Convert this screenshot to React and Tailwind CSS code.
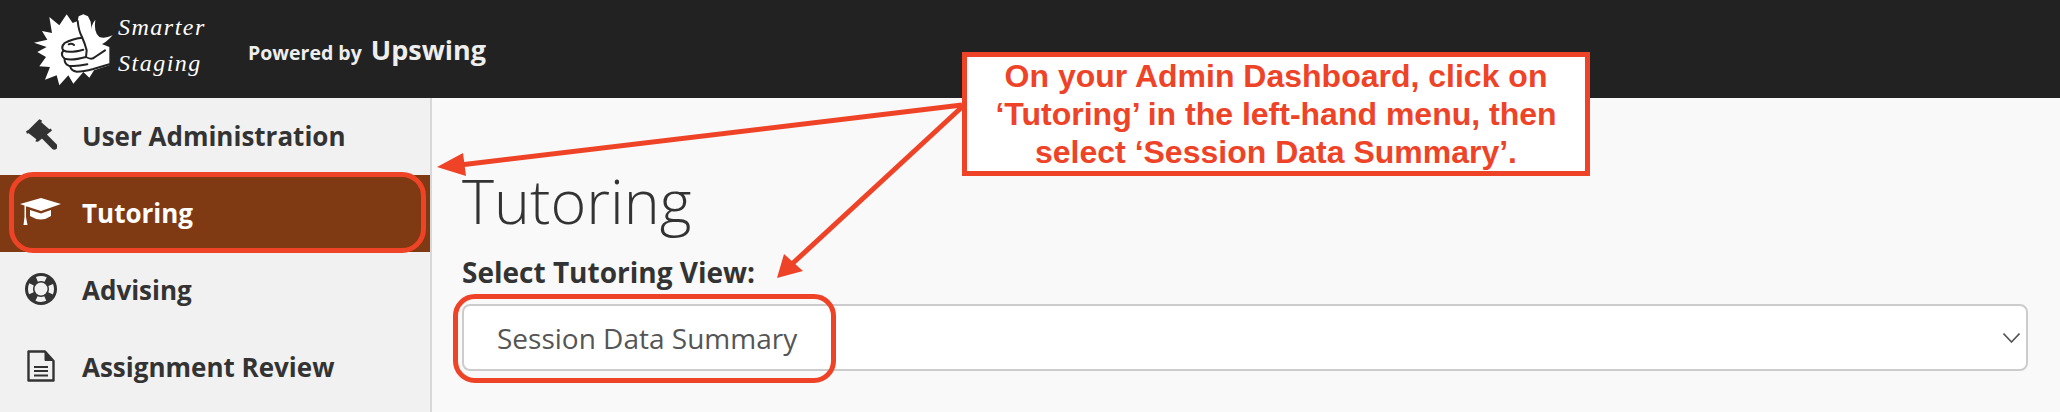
import React from 'react';

const openSans = { fontFamily: '"Open Sans", sans-serif' };

const GavelIcon = () => (
    <svg width="31" height="31" viewBox="0 0 93 92" fill="currentColor">
        <path d="M0 36 L8 32 L36 4 L40 0 L48 4 L46 9 L70 30 L74 28 L78 34 L36 68 L28 67 L31 60 L8 42 L3 44 Z" />
        <path d="M50 47 L85 82" stroke="currentColor" strokeWidth="19" strokeLinecap="round" />
    </svg>
);

const CapIcon = () => (
    <svg width="42" height="28" viewBox="0 0 42 28" fill="currentColor">
        <path d="M0 6 L21 0 L41 6 L21 13 L7 8.5 L6 8.5 L6 19 L7.5 27 L3.5 27 L4.5 19 L4.5 7.5 Z" />
        <path d="M10 12 L21 15.5 L31 12 L31 18 Q21 25 10 18 Z" />
    </svg>
);

const RingIcon = () => (
    <svg width="32" height="32" viewBox="0 0 32 32">
        <circle cx="16" cy="16" r="16" fill="currentColor" />
        <circle cx="16" cy="16" r="10.5" fill="none" stroke="#f1f1f1" strokeWidth="5" strokeDasharray="9 7.49" strokeDashoffset="4.5" />
        <circle cx="16" cy="16" r="6.5" fill="#f1f1f1" />
    </svg>
);

const FileIcon = () => (
    <svg width="28" height="32" viewBox="0 0 28 32" fill="none" stroke="currentColor">
        <path d="M1.5 1.5 H18 L26.5 11 V30.5 H1.5 Z" strokeWidth="2.4" strokeLinejoin="round" />
        <path d="M18 1.5 V10.5 H26.5 Z" fill="currentColor" strokeWidth="1" />
        <path d="M7 17 H21 M7 21 H21 M7 25.5 H21" strokeWidth="2" />
    </svg>
);

const navItems = [
    { label: 'User Administration', icon: GavelIcon },
    { label: 'Tutoring', icon: CapIcon, active: true },
    { label: 'Advising', icon: RingIcon },
    { label: 'Assignment Review', icon: FileIcon },
];

const Logo = () => (
    <svg width="90" height="85" viewBox="0 0 270 255" className="shrink-0">
        {/* burst + thumb */}
        <polygon
            fill="#fff"
            points="12,107 52,98 36,72 66,78 58,30 88,55 110,22 128,48 143,42 146,28 160,22 174,28 182,44 186,78 198,104 238,120 238,175 192,190 178,212 160,195 130,230 115,205 88,235 80,205 45,218 60,180 28,178 48,150 22,135 50,120"
        />
        {/* crescent */}
        <path d="M196 38 Q190 75 208 90 Q225 96 248 85 Q225 110 210 114 Q190 108 182 80 Q182 55 196 38 Z" fill="#fff" />
        {/* fingers */}
        <g fill="none" stroke="#222" strokeWidth="6" strokeLinecap="round" strokeLinejoin="round">
            <path d="M143 42 Q146 72 156 90 Q165 110 170 130 L168 150 Q185 160 195 150 L225 130" />
            <path d="M156 92 Q125 96 104 108 Q92 120 100 130 Q115 140 160 128" />
            <path d="M116 112 Q125 108 132 114" />
            <path d="M100 130 Q90 145 104 155 Q125 162 168 150" />
            <path d="M104 155 Q102 170 116 176 Q135 180 172 172" />
            <path d="M120 178 Q124 192 140 194 Q160 194 190 186 L238 172" />
        </g>
    </svg>
);

const NavRow = ({ label, icon: Icon, active }) => (
    <div className={`flex h-[77px] items-center ${active ? 'bg-[#7f3a13] text-white' : 'text-[#333]'}`}>
        <div className="mb-[4px] flex w-[82px] shrink-0 items-center justify-center">
            <Icon />
        </div>
        <span className="text-[26px] font-bold">{label}</span>
    </div>
);

const App = () => {
    return (
        <div className="relative flex h-[412px] w-[2060px] flex-col overflow-hidden bg-[#f9f9f9]" style={openSans}>
            {/* Header */}
            <header className="flex h-[98px] shrink-0 items-center bg-[#222] pl-[30px] text-white">
                <Logo />
                <div className="-ml-[2px] mb-[8px] flex w-[100px] flex-col gap-[12px] text-[24px] italic leading-[24px] tracking-[1.5px]" style={{ fontFamily: '"Liberation Serif", serif' }}>
                    <span>Smarter</span>
                    <span>Staging</span>
                </div>
                <div className="ml-[30px] mt-[5px] flex items-baseline text-[19.5px] font-bold text-[#eee]">
                    <span>Powered by</span>
                    <span className="ml-[9px] text-[27px] leading-none">Upswing</span>
                </div>
            </header>

            <div className="flex flex-1">
                {/* Sidebar */}
                <aside className="w-[432px] shrink-0 border-r-2 border-[#d8d8d8] bg-[#f1f1f1]">
                    {navItems.map(item => (
                        <NavRow key={item.label} {...item} />
                    ))}
                </aside>

                {/* Main */}
                <main className="flex-1 pl-[30px] pr-[32px]">
                    <h1 className="mt-[65px] text-[61px] font-[350] leading-[76px] text-[#333]">Tutoring</h1>
                    <label className="mt-[14px] block text-[28px] font-bold leading-[38px] text-[#333]">Select Tutoring View:</label>
                    <div className="mt-[13px] flex h-[67px] items-center justify-between rounded-[8px] border-2 border-[#ccc] bg-white pl-[33px] pr-[6px] text-[28px] text-[#555]">
                        <span>Session Data Summary</span>
                        <svg width="17" height="10" viewBox="0 0 17 10" fill="none" stroke="#555" strokeWidth="1.6">
                            <path d="M0.5 0.5 L8.5 9 L16.5 0.5" />
                        </svg>
                    </div>
                </main>
            </div>

            {/* Annotations */}
            <svg width="2060" height="412" className="pointer-events-none absolute left-0 top-0">
                <g stroke="#ee4327" strokeWidth="5" fill="#ee4327">
                    <line x1="962" y1="105" x2="460" y2="165" />
                    <line x1="962" y1="107" x2="792" y2="264" />
                </g>
                <polygon fill="#ee4327" points="437,167 463,153 466,176" />
                <polygon fill="#ee4327" points="777,278 784,254 803,271" />
            </svg>
            <div className="absolute left-[9px] top-[172px] h-[81px] w-[417px] rounded-[24px] border-[5px] border-[#ee4327]" />
            <div className="absolute left-[453px] top-[294px] h-[89px] w-[383px] rounded-[22px] border-[5px] border-[#ee4327]" />
            <div
                className="absolute left-[962px] top-[52px] flex h-[124px] w-[628px] flex-col items-center justify-center border-[5px] border-[#ee4327] bg-white text-center text-[32px] font-bold leading-[38px] text-[#ee4327]"
                style={{ fontFamily: '"Liberation Sans", sans-serif' }}
            >
                <span>On your Admin Dashboard, click on</span>
                <span>‘Tutoring’ in the left-hand menu, then</span>
                <span>select ‘Session Data Summary’.</span>
            </div>
        </div>
    );
};

export default App;
